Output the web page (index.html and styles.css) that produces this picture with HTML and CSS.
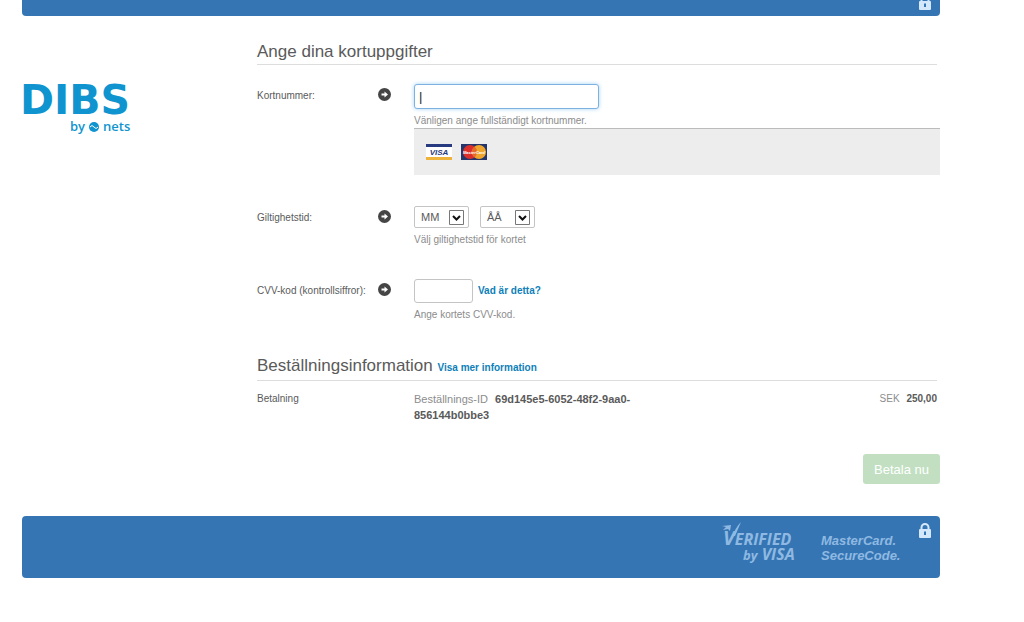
FILE: index.html
```html
<!DOCTYPE html>
<html lang="sv">
<head>
<meta charset="utf-8">
<title>DIBS betalning</title>
<link rel="stylesheet" href="styles.css">
</head>
<body>
<svg class="defs" width="0" height="0" aria-hidden="true">
  <symbol id="lock" viewBox="0 0 12 15">
    <path d="M2.5 7V4.5a3.5 3.5 0 0 1 7 0V7" fill="none" stroke="#d5e7fb" stroke-width="2"/>
    <rect y="6" width="12" height="9" rx="1" fill="#d5e7fb"/>
    <path d="M6 8.500v3.500" stroke="#3575b3" stroke-width="2"/>
  </symbol>
  <symbol id="arrow" viewBox="0 0 13 13">
    <circle cx="6.500" cy="6.500" r="6.500" fill="#454545"/>
    <path d="M3.500 5.500h3V3.500l3.500 3-3.500 3V7.500h-3z" fill="#fff"/>
  </symbol>
</svg>
<div class="page">
  <header class="bar bar-top"><svg class="lock" aria-hidden="true"><use href="#lock"/></svg></header>
  <div class="content">
    <aside class="brand">
      <svg class="logo" width="112" height="52" viewBox="0 0 112 52" role="img" aria-label="DIBS by nets">
        <g fill="#0f94cf">
          <text class="logo-main" x="-2" y="29">DIBS</text>
          <text class="logo-sub" x="48" y="46">by</text>
          <text class="logo-sub" x="81" y="46">nets</text>
          <ellipse cx="72" cy="42" rx="5" ry="5"/>
        </g>
        <path d="M68 42q2-3 4 0t4 0" fill="none" stroke="#fff" stroke-width="1"/>
      </svg>
    </aside>
    <form class="form">
      <h1 class="heading">Ange dina kortuppgifter</h1>
      <div class="row row-card">
        <label class="label" for="card">Kortnummer:</label>
        <svg class="arrow" aria-hidden="true"><use href="#arrow"/></svg>
        <div class="field">
          <input class="input input-card" id="card" type="text" value="|">
          <p class="help">Vänligen ange fullständigt kortnummer.</p>
          <div class="cards">
            <svg width="26" height="16" viewBox="0 0 26 16" role="img" aria-label="Visa">
              <path fill="#fff" d="M0 0h26v16H0z"/><path fill="#283a80" d="M0 0h26v3H0z"/><path fill="#edb33b" d="M0 13h26v3H0z"/>
              <text class="visa" x="13" y="11">VISA</text>
            </svg>
            <svg width="26" height="16" viewBox="0 0 26 16" role="img" aria-label="MasterCard">
              <path fill="#24356c" d="M0 0h26v16H0z"/><circle cx="9" cy="8" r="7" fill="#db2f2c"/><circle cx="18" cy="8" r="7" fill="#efa52c"/><path d="M13.500 2.600a7 7 0 0 1 0 10.800 7 7 0 0 1 0-10.800" fill="#e56b2c"/>
              <text class="mc" x="13" y="10">MasterCard</text>
            </svg>
          </div>
        </div>
      </div>
      <div class="row row-date">
        <label class="label" for="month">Giltighetstid:</label>
        <svg class="arrow" aria-hidden="true"><use href="#arrow"/></svg>
        <div class="field">
          <div class="selects">
            <span class="pick"><select id="month"><option>MM</option></select><svg class="chev" viewBox="0 0 15 15" aria-hidden="true"><path d="M.5.5h14v14H.5z" fill="#fff" stroke="#777"/><path d="M4 6l3.500 3.500L11 6" fill="none" stroke="#111" stroke-width="2"/></svg></span>
            <span class="pick"><select aria-label="År"><option>ÅÅ</option></select><svg class="chev" viewBox="0 0 15 15" aria-hidden="true"><path d="M.5.5h14v14H.5z" fill="#fff" stroke="#777"/><path d="M4 6l3.500 3.500L11 6" fill="none" stroke="#111" stroke-width="2"/></svg></span>
          </div>
          <p class="help">Välj giltighetstid för kortet</p>
        </div>
      </div>
      <div class="row row-cvv">
        <label class="label" for="cvv">CVV-kod (kontrollsiffror):</label>
        <svg class="arrow" aria-hidden="true"><use href="#arrow"/></svg>
        <div class="field">
          <div class="cvv"><input class="input input-cvv" id="cvv" type="text"><a class="link" href="#">Vad är detta?</a></div>
          <p class="help">Ange kortets CVV-kod.</p>
        </div>
      </div>
      <h2 class="heading">Beställningsinformation <a class="link" href="#">Visa mer information</a></h2>
      <div class="order">
        <span>Betalning</span>
        <p class="order-id"><span class="muted">Beställnings-ID</span> <b>69d145e5-6052-48f2-9aa0-856144b0bbe3</b></p>
        <p class="total"><span class="muted">SEK</span> <b>250,00</b></p>
      </div>
      <div class="actions"><button class="pay" type="submit">Betala nu</button></div>
    </form>
  </div>
  <footer class="bar bar-bottom">
    <svg class="badge" width="78" height="42" viewBox="0 0 78 42" role="img" aria-label="Verified by Visa">
      <g fill="#8fb9e2">
        <text class="secure" x="1" y="23"><tspan class="big">V</tspan>ERIFIED</text>
        <text class="secure" x="21" y="38"><tspan class="by">by</tspan> VISA</text>
        <path d="M0 4l9-1-1 6-2-2-5 1 3-3zM11 14Q13 6 19 0q-3 7-6 14z"/>
      </g>
    </svg>
    <svg class="badge" width="82" height="42" viewBox="0 0 82 42" role="img" aria-label="MasterCard SecureCode">
      <g class="mc-secure" fill="#8fb9e2"><text x="0" y="23">MasterCard.</text><text x="0" y="38">SecureCode.</text></g>
    </svg>
    <svg class="lock" aria-hidden="true"><use href="#lock"/></svg>
  </footer>
</div>
</body>
</html>
```
FILE: styles.css
```css
* { box-sizing: border-box; }
body { margin: 0; background: #fff; color: #5a5a5a; font: 10px/16px "Liberation Sans", Arial, sans-serif; }
h1, h2, p { margin: 0; }
svg { display: block; flex: none; }
.defs { position: absolute; }
.page { margin: 0 84px 0 22px; }
.bar { display: flex; justify-content: flex-end; background: #3575b3; }
.bar-top { height: 16px; padding: 0 9px 6px 0; align-items: flex-end; overflow: hidden; border-radius: 0 0 4px 4px; }
.lock { width: 12px; height: 15px; }
.content { display: grid; grid-template-columns: 235px minmax(0, 1fr); }
.brand { padding-top: 69px; }
.logo { overflow: visible; }
.logo-main { font: bold 41px "DejaVu Sans", sans-serif; }
.logo-sub { font: 600 13px "Open Sans", sans-serif; }
.form { padding-top: 24px; }
.heading { margin-right: 3px; padding-bottom: 1px; border-bottom: 1px solid #ddd; font-size: 17px; line-height: 23px; font-weight: normal; }
.link { color: #0e7fb8; font-size: 10px; font-weight: bold; text-decoration: none; }
.row { display: grid; grid-template-columns: 121px 36px minmax(0, 1fr); align-items: start; }
.row-card { padding-top: 19px; }
.row-date { padding-top: 31px; }
.row-cvv { padding-top: 31px; }
.label { padding-top: 4px; white-space: nowrap; }
.arrow { width: 13px; height: 13px; margin-top: 4px; }
.input { display: block; height: 24px; padding: 0 4px; border: 1px solid #c4c4c4; border-radius: 3px; background: #fff; color: #222; font: 13px "Liberation Sans", Arial, sans-serif; outline: none; }
.input-card { width: 185px; height: 25px; border-color: #7db2e0; box-shadow: 0 0 4px #a5d3f5; }
.input-cvv { width: 59px; }
.help { padding-top: 4px; color: #8c8c8c; }
.cards { display: flex; gap: 9px; height: 47px; margin-top: -1px; padding: 15px 12px; border-top: 1px solid #bbb; background: #ededed; }
.visa { font: italic bold 8px "Liberation Sans", sans-serif; text-anchor: middle; fill: #283a80; }
.mc { font: italic bold 4px "Liberation Sans", sans-serif; text-anchor: middle; fill: #fff; }
.selects { display: flex; gap: 11px; }
.pick { display: grid; align-items: center; width: 55px; height: 22px; }
.pick > * { grid-area: 1 / 1; }
.pick select { width: 100%; height: 22px; padding: 0 6px; border: 1px solid #c4c4c4; border-radius: 2px; background: #fff; color: #5a5a5a; appearance: none; font: 11px "Liberation Sans", Arial, sans-serif; }
.chev { width: 15px; height: 15px; margin-right: 5px; justify-self: end; pointer-events: none; }
.cvv { display: flex; align-items: center; gap: 5px; }
h2.heading { margin-top: 31px; }
.order { display: grid; grid-template-columns: 157px 220px minmax(0, 1fr); padding: 10px 3px 0 0; }
.order-id { font-size: 11px; }
.muted { margin-right: 4px; color: #8c8c8c; }
.total { text-align: right; }
.actions { display: flex; justify-content: flex-end; padding-top: 31px; }
.pay { width: 77px; height: 30px; padding: 0; border: 0; border-radius: 3px; background: #c2dfc2; color: #fff; font: 13px "Liberation Sans", Arial, sans-serif; }
.bar-bottom { height: 62px; margin-top: 32px; padding: 7px 9px 0 0; border-radius: 4px; }
.badge { margin-top: -1px; margin-right: 21px; }
.badge + .badge { margin-right: 16px; }
.secure { font: italic bold 16px "Open Sans", sans-serif; }
.mc-secure { font: italic bold 13px "Liberation Sans", sans-serif; }
.big { font-size: 20px; }
.by { font-size: 13px; }
```
